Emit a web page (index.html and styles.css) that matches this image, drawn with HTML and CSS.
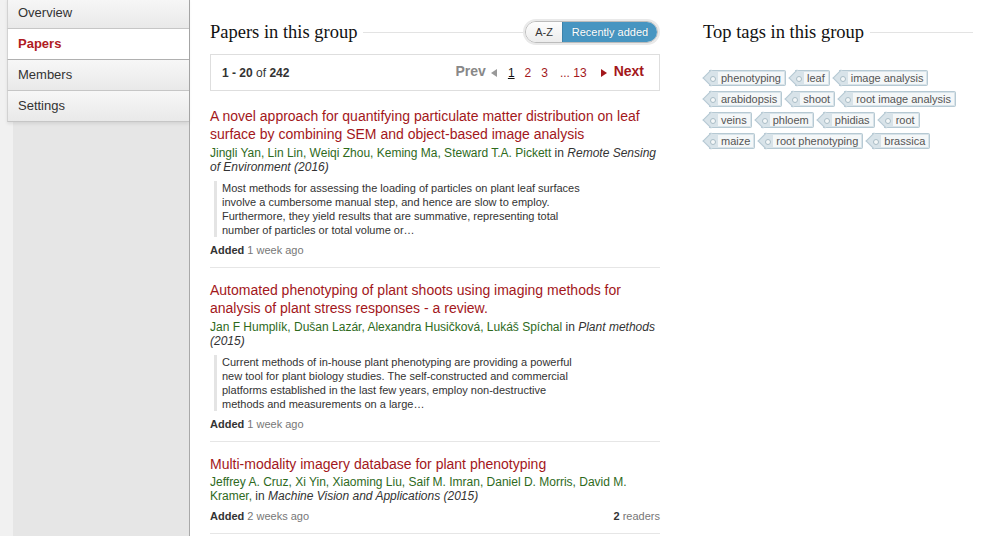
FILE: index.html
```html
<!DOCTYPE html>
<html lang="en">
<head>
<meta charset="utf-8">
<title>Papers in this group</title>
<link rel="stylesheet" href="styles.css">
</head>
<body>
<div class="page">
  <aside class="sidebar">
    <nav class="nav">
      <a class="nav-item" href="#">Overview</a>
      <a class="nav-item active" href="#">Papers</a>
      <a class="nav-item" href="#">Members</a>
      <a class="nav-item" href="#">Settings</a>
    </nav>
  </aside>

  <main class="main">
    <div class="section-head">
      <h2 class="section-title">Papers in this group</h2>
      <span class="rule"></span>
      <div class="toggle">
        <span class="toggle-opt">A-Z</span>
        <span class="toggle-opt on">Recently added</span>
      </div>
    </div>

    <div class="pager">
      <div class="pager-count"><b>1 - 20</b> of <b>242</b></div>
      <div class="pager-links">
        <span class="pager-prev">Prev</span>
        <span class="arrow arrow-left"></span>
        <span class="pg current">1</span>
        <a class="pg" href="#">2</a>
        <a class="pg" href="#">3</a>
        <span class="pg dots">... 13</span>
        <span class="arrow arrow-right"></span>
        <a class="pager-next" href="#">Next</a>
      </div>
    </div>

    <ul class="papers">
      <li class="paper">
        <a class="paper-title" href="#">A novel approach for quantifying particulate matter distribution on leaf surface by combining SEM and object-based image analysis</a>
        <p class="paper-authors"><span class="au">Jingli Yan, Lin Lin, Weiqi Zhou, Keming Ma, Steward T.A. Pickett</span> in <i>Remote Sensing of Environment (2016)</i></p>
        <blockquote class="paper-abstract">Most methods for assessing the loading of particles on plant leaf surfaces involve a cumbersome manual step, and hence are slow to employ. Furthermore, they yield results that are summative, representing total number of particles or total volume or…</blockquote>
        <div class="paper-meta"><span><b>Added</b> <span class="when">1 week ago</span></span></div>
      </li>
      <li class="paper">
        <a class="paper-title" href="#">Automated phenotyping of plant shoots using imaging methods for analysis of plant stress responses - a review.</a>
        <p class="paper-authors"><span class="au">Jan F Humplík, Dušan Lazár, Alexandra Husičková, Lukáš Spíchal</span> in <i>Plant methods (2015)</i></p>
        <blockquote class="paper-abstract">Current methods of in-house plant phenotyping are providing a powerful new tool for plant biology studies. The self-constructed and commercial platforms established in the last few years, employ non-destructive methods and measurements on a large…</blockquote>
        <div class="paper-meta"><span><b>Added</b> <span class="when">1 week ago</span></span></div>
      </li>
      <li class="paper">
        <a class="paper-title" href="#">Multi-modality imagery database for plant phenotyping</a>
        <p class="paper-authors tight"><span class="au">Jeffrey A. Cruz, Xi Yin, Xiaoming Liu, Saif M. Imran, Daniel D. Morris, David M. Kramer,</span> in <i>Machine Vision and Applications (2015)</i></p>
        <div class="paper-meta"><span><b>Added</b> <span class="when">2 weeks ago</span></span><span><b>2</b> <span class="when">readers</span></span></div>
      </li>
    </ul>
  </main>

  <aside class="tags-col">
    <div class="section-head">
      <h2 class="section-title">Top tags in this group</h2>
      <span class="rule"></span>
    </div>
    <div class="tags">
      <a class="tag" href="#"><span>phenotyping</span></a>
      <a class="tag" href="#"><span>leaf</span></a>
      <a class="tag" href="#"><span>image analysis</span></a>
      <a class="tag" href="#"><span>arabidopsis</span></a>
      <a class="tag" href="#"><span>shoot</span></a>
      <a class="tag" href="#"><span>root image analysis</span></a>
      <a class="tag" href="#"><span>veins</span></a>
      <a class="tag" href="#"><span>phloem</span></a>
      <a class="tag" href="#"><span>phidias</span></a>
      <a class="tag" href="#"><span>root</span></a>
      <a class="tag" href="#"><span>maize</span></a>
      <a class="tag" href="#"><span>root phenotyping</span></a>
      <a class="tag" href="#"><span>brassica</span></a>
    </div>
  </aside>
</div>
</body>
</html>
```

FILE: styles.css
```css
* { box-sizing: border-box; }

body {
  margin: 0;
  font-family: "Liberation Sans", Arial, sans-serif;
  color: #333;
  background: #fff;
}

a { text-decoration: none; }

.page {
  display: flex;
  min-height: 536px;
}

/* Sidebar */
.sidebar {
  width: 190px;
  flex: none;
  padding-left: 7px;
  border-right: 1px solid #a9a9a9;
  background: linear-gradient(to right, #f1f1f1 13px, #e6e6e6 13px);
}

.nav {
  margin-top: -2px;
  box-shadow: 0 2px 3px rgba(0, 0, 0, 0.08);
}

.nav-item {
  display: block;
  height: 31px;
  line-height: 30px;
  padding-left: 10px;
  border-left: 1px solid #d2d2d2;
  border-bottom: 1px solid #c6c6c6;
  background: linear-gradient(#f7f7f7, #e9e9e9);
  font-size: 13px;
  color: #333;
}

.nav-item.active {
  background: #fff;
  color: #b01b22;
  font-weight: bold;
  border-bottom-color: #b0b0b0;
}

/* Main column */
.main {
  width: 450px;
  flex: none;
  margin-left: 20px;
}

.section-head {
  display: flex;
  align-items: center;
  height: 28px;
  margin-top: 18px;
}

.section-title {
  margin: 0;
  font-family: "Liberation Serif", "Times New Roman", serif;
  font-weight: normal;
  font-size: 18.5px;
  color: #111;
  white-space: nowrap;
}

.rule {
  flex: 1;
  height: 1px;
  margin-left: 6px;
  background: #e3e3e3;
}

.toggle {
  display: flex;
  height: 22px;
  border: 1px solid #bcbcbc;
  border-radius: 12px;
  overflow: hidden;
  box-shadow: 0 0 0 2px #e9e9e9;
  margin-right: 2px;
  font-size: 11px;
}

.toggle-opt {
  display: flex;
  align-items: center;
  justify-content: center;
  width: 36px;
  color: #333;
  background: linear-gradient(#fdfdfd, #ececec);
}

.toggle-opt.on {
  width: 95px;
  color: #fff;
  background: #4795c1;
  border-left: 1px solid #3c82aa;
  text-shadow: 0 0 1px rgba(0, 0, 0, 0.2);
}

/* Pager */
.pager {
  display: flex;
  justify-content: space-between;
  align-items: center;
  height: 37px;
  margin-top: 8px;
  padding: 0 15px 0 11px;
  border: 1px solid #dedede;
  font-size: 12px;
}

.pager-count b { color: #333; }

.pager-links {
  display: flex;
  align-items: center;
}

.pager-prev {
  font-size: 14px;
  font-weight: bold;
  color: #888;
  margin-top: -4px;
}

.pager-next {
  font-size: 14px;
  font-weight: bold;
  color: #a3171b;
  margin-top: -4px;
}

.arrow {
  width: 0;
  height: 0;
  border-top: 4px solid transparent;
  border-bottom: 4px solid transparent;
}

.arrow-left {
  border-right: 6px solid #999;
  margin: 0 11px 0 5px;
}

.arrow-right {
  border-left: 6px solid #a3171b;
  margin: 0 7px 0 14px;
}

.pg {
  color: #a3171b;
  margin-right: 10px;
}

.pg.current {
  color: #111;
  text-decoration: underline;
}

.pg.dots { margin-right: 0; margin-left: 2px; }

/* Papers */
.papers {
  list-style: none;
  margin: 3px 0 0;
  padding: 0;
}

.paper {
  padding: 13px 0 10px;
  border-bottom: 1px solid #e6e6e6;
}

.paper-title {
  display: block;
  font-size: 14px;
  line-height: 18px;
  color: #a3171b;
}

.paper-authors {
  margin: 3px 0 0;
  font-size: 12px;
  line-height: 14px;
  color: #333;
}

.paper-authors.tight { margin-top: 2px; }

.paper-authors .au { color: #2e6a1c; }

.paper-abstract {
  margin: 7px 0 0 4px;
  width: 372px;
  padding-left: 5px;
  border-left: 3px solid #e4e4e4;
  font-size: 11px;
  line-height: 14px;
  color: #333;
}

.paper-meta {
  display: flex;
  justify-content: space-between;
  margin-top: 6px;
  font-size: 11px;
  line-height: 14px;
  color: #333;
}

.when { color: #777; }

/* Tags column */
.tags-col {
  width: 270px;
  flex: none;
  margin-left: 43px;
}

.tags {
  display: flex;
  flex-wrap: wrap;
  gap: 5px 3px;
  margin-top: 24px;
}

.tag {
  position: relative;
  display: flex;
  align-items: center;
  height: 16px;
  margin-left: 6px;
  padding: 0 1px 0 9px;
  border: 1px solid #b6c9d3;
  border-left: 0;
  border-radius: 0 2px 2px 0;
  background: #d8e3e9;
  font-size: 11px;
  color: #555;
}

.tag::before {
  content: "";
  position: absolute;
  left: -4px;
  top: 1px;
  width: 11px;
  height: 11px;
  transform: rotate(45deg);
  background: #d8e3e9;
  border-left: 1px solid #b6c9d3;
  border-bottom: 1px solid #b6c9d3;
}

.tag::after {
  content: "";
  position: absolute;
  left: 1px;
  top: 5px;
  width: 4px;
  height: 4px;
  border-radius: 50%;
  background: #f4f7f8;
  border: 1px solid #a9bcc6;
}

.tag span {
  position: relative;
  z-index: 1;
  height: 12px;
  line-height: 12px;
  padding: 0 3px;
  background: #f4f7f8;
}
```
